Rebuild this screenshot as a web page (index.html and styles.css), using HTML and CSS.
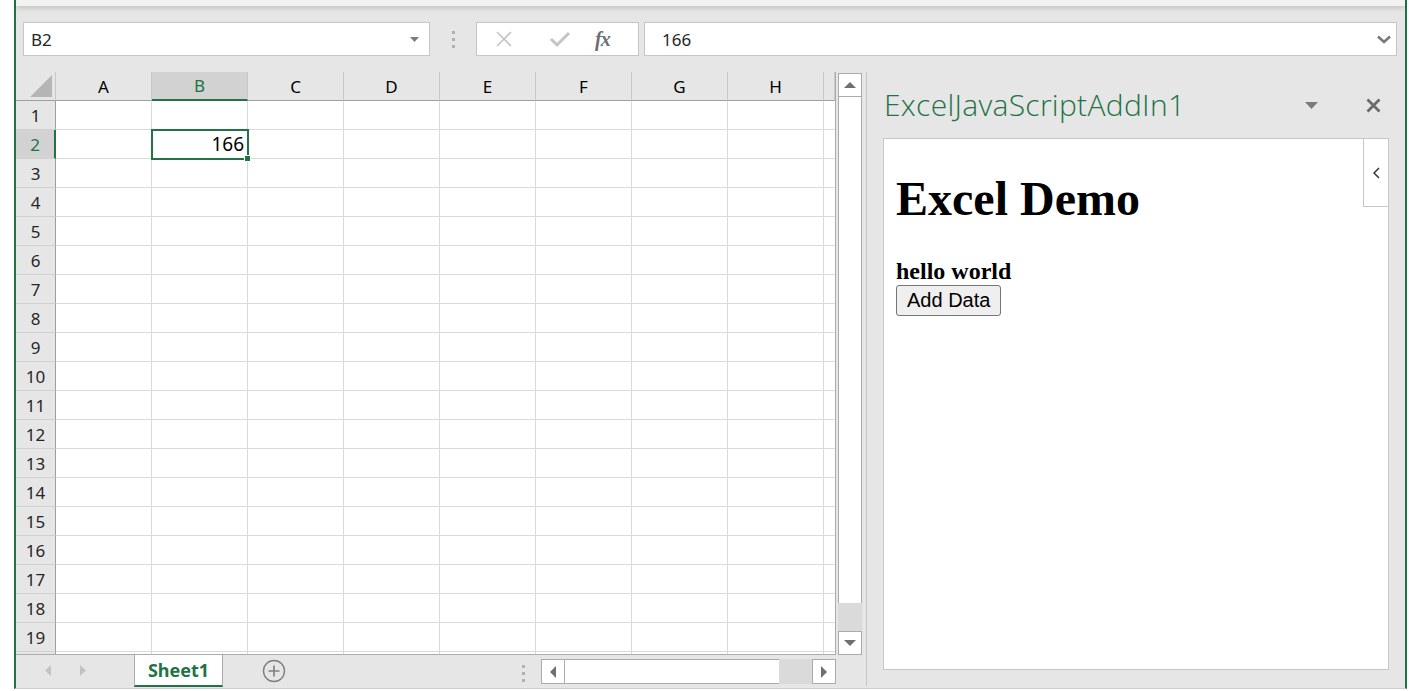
FILE: index.html
```html
<!DOCTYPE html>
<html>
<head>
<meta charset="utf-8">
<title>Excel</title>
<link rel="stylesheet" href="styles.css">
</head>
<body>
<div class="app">
  <div class="gutter"></div>
  <div class="window">
    <div class="topstrip"></div>
    <div class="formula-row">
      <div class="namebox">
        <span>B2</span>
        <svg width="9" height="5" viewBox="0 0 9 5"><path d="M0 0h9L4.5 5z" fill="#7a7a7a"/></svg>
      </div>
      <div class="grip"><i></i><i></i><i></i></div>
      <div class="fbtns">
        <svg class="fx-x" width="18" height="18" viewBox="0 0 18 18"><path d="M2 2L16 16M16 2L2 16" stroke="#c4c4c4" stroke-width="1.6"/></svg>
        <svg class="fx-ok" width="22" height="18" viewBox="0 0 22 18"><path d="M2 9l6 6L20 3" stroke="#c4c4c4" stroke-width="3" fill="none"/></svg>
        <span class="fx">fx</span>
      </div>
      <div class="finput">
        <span>166</span>
        <svg width="14" height="9" viewBox="0 0 14 9"><path d="M1 1.5l6 5.5 6-5.5" stroke="#7a7a7a" stroke-width="2.6" fill="none"/></svg>
      </div>
    </div>
    <div class="main">
      <div class="sheetarea">
        <div class="sheetrow">
          <div class="grid">
            <div class="r hdr">
              <div class="rh corner"><svg width="22" height="22" viewBox="0 0 22 22"><path d="M22 0V22H0z" fill="#b5b5b5"/></svg></div>
              <div class="c">A</div><div class="c sel">B</div><div class="c">C</div><div class="c">D</div><div class="c">E</div><div class="c">F</div><div class="c">G</div><div class="c">H</div><div class="c"></div>
            </div>
            <div class="r"><div class="rh">1</div><div class="c"></div><div class="c"></div><div class="c"></div><div class="c"></div><div class="c"></div><div class="c"></div><div class="c"></div><div class="c"></div><div class="c"></div></div>
            <div class="r"><div class="rh sel">2</div><div class="c"></div><div class="c active">166</div><div class="c"></div><div class="c"></div><div class="c"></div><div class="c"></div><div class="c"></div><div class="c"></div><div class="c"></div></div>
            <div class="r"><div class="rh">3</div><div class="c"></div><div class="c"></div><div class="c"></div><div class="c"></div><div class="c"></div><div class="c"></div><div class="c"></div><div class="c"></div><div class="c"></div></div>
            <div class="r"><div class="rh">4</div><div class="c"></div><div class="c"></div><div class="c"></div><div class="c"></div><div class="c"></div><div class="c"></div><div class="c"></div><div class="c"></div><div class="c"></div></div>
            <div class="r"><div class="rh">5</div><div class="c"></div><div class="c"></div><div class="c"></div><div class="c"></div><div class="c"></div><div class="c"></div><div class="c"></div><div class="c"></div><div class="c"></div></div>
            <div class="r"><div class="rh">6</div><div class="c"></div><div class="c"></div><div class="c"></div><div class="c"></div><div class="c"></div><div class="c"></div><div class="c"></div><div class="c"></div><div class="c"></div></div>
            <div class="r"><div class="rh">7</div><div class="c"></div><div class="c"></div><div class="c"></div><div class="c"></div><div class="c"></div><div class="c"></div><div class="c"></div><div class="c"></div><div class="c"></div></div>
            <div class="r"><div class="rh">8</div><div class="c"></div><div class="c"></div><div class="c"></div><div class="c"></div><div class="c"></div><div class="c"></div><div class="c"></div><div class="c"></div><div class="c"></div></div>
            <div class="r"><div class="rh">9</div><div class="c"></div><div class="c"></div><div class="c"></div><div class="c"></div><div class="c"></div><div class="c"></div><div class="c"></div><div class="c"></div><div class="c"></div></div>
            <div class="r"><div class="rh">10</div><div class="c"></div><div class="c"></div><div class="c"></div><div class="c"></div><div class="c"></div><div class="c"></div><div class="c"></div><div class="c"></div><div class="c"></div></div>
            <div class="r"><div class="rh">11</div><div class="c"></div><div class="c"></div><div class="c"></div><div class="c"></div><div class="c"></div><div class="c"></div><div class="c"></div><div class="c"></div><div class="c"></div></div>
            <div class="r"><div class="rh">12</div><div class="c"></div><div class="c"></div><div class="c"></div><div class="c"></div><div class="c"></div><div class="c"></div><div class="c"></div><div class="c"></div><div class="c"></div></div>
            <div class="r"><div class="rh">13</div><div class="c"></div><div class="c"></div><div class="c"></div><div class="c"></div><div class="c"></div><div class="c"></div><div class="c"></div><div class="c"></div><div class="c"></div></div>
            <div class="r"><div class="rh">14</div><div class="c"></div><div class="c"></div><div class="c"></div><div class="c"></div><div class="c"></div><div class="c"></div><div class="c"></div><div class="c"></div><div class="c"></div></div>
            <div class="r"><div class="rh">15</div><div class="c"></div><div class="c"></div><div class="c"></div><div class="c"></div><div class="c"></div><div class="c"></div><div class="c"></div><div class="c"></div><div class="c"></div></div>
            <div class="r"><div class="rh">16</div><div class="c"></div><div class="c"></div><div class="c"></div><div class="c"></div><div class="c"></div><div class="c"></div><div class="c"></div><div class="c"></div><div class="c"></div></div>
            <div class="r"><div class="rh">17</div><div class="c"></div><div class="c"></div><div class="c"></div><div class="c"></div><div class="c"></div><div class="c"></div><div class="c"></div><div class="c"></div><div class="c"></div></div>
            <div class="r"><div class="rh">18</div><div class="c"></div><div class="c"></div><div class="c"></div><div class="c"></div><div class="c"></div><div class="c"></div><div class="c"></div><div class="c"></div><div class="c"></div></div>
            <div class="r"><div class="rh">19</div><div class="c"></div><div class="c"></div><div class="c"></div><div class="c"></div><div class="c"></div><div class="c"></div><div class="c"></div><div class="c"></div><div class="c"></div></div>
            <div class="r"><div class="rh"></div><div class="c"></div><div class="c"></div><div class="c"></div><div class="c"></div><div class="c"></div><div class="c"></div><div class="c"></div><div class="c"></div><div class="c"></div></div>
          </div>
          <div class="vscroll">
            <div class="sbtn"><svg width="12" height="6" viewBox="0 0 12 6"><path d="M0 6h12L6 0z" fill="#6f6f6f"/></svg></div>
            <div class="vthumb"></div>
            <div class="vtrack"></div>
            <div class="sbtn"><svg width="12" height="6" viewBox="0 0 12 6"><path d="M0 0h12L6 6z" fill="#6f6f6f"/></svg></div>
          </div>
        </div>
        <div class="tabbar">
          <div class="navs">
            <svg width="6" height="11" viewBox="0 0 6 11"><path d="M6 0V11L0 5.5z" fill="#c3c3c3"/></svg>
            <svg width="6" height="11" viewBox="0 0 6 11"><path d="M0 0V11L6 5.5z" fill="#c3c3c3"/></svg>
          </div>
          <div class="tab">Sheet1</div>
          <div class="addsheet"><svg width="24" height="24" viewBox="0 0 24 24"><circle cx="12" cy="12" r="10.5" fill="none" stroke="#7f7f7f" stroke-width="1.4"/><path d="M12 6.5v11M6.5 12h11" stroke="#7f7f7f" stroke-width="1.6"/></svg></div>
          <div class="grip2"><i></i><i></i><i></i></div>
          <div class="hscroll">
            <div class="sbtn"><svg width="6" height="12" viewBox="0 0 6 12"><path d="M6 0V12L0 6z" fill="#6f6f6f"/></svg></div>
            <div class="hthumb"></div>
            <div class="htrack"></div>
            <div class="sbtn"><svg width="6" height="12" viewBox="0 0 6 12"><path d="M0 0V12L6 6z" fill="#6f6f6f"/></svg></div>
          </div>
        </div>
      </div>
      <div class="taskpane">
        <div class="pane-head">
          <div class="pane-title">ExcelJavaScriptAddIn1</div>
          <svg class="pane-menu" width="13" height="7" viewBox="0 0 13 7"><path d="M0 0h13L6.5 7z" fill="#7a7a7a"/></svg>
          <svg class="pane-close" width="15" height="15" viewBox="0 0 15 15"><path d="M1.5 1.5l12 12M13.5 1.5l-12 12" stroke="#6a6a6a" stroke-width="2.8"/></svg>
        </div>
        <div class="pane-body">
          <div class="collapse"><svg width="7" height="12" viewBox="0 0 7 12"><path d="M6 1L1 6l5 5" stroke="#333" stroke-width="1.5" fill="none"/></svg></div>
          <div class="doc">
            <h1>Excel Demo</h1>
            <b class="hello">hello world</b><br>
            <button class="addbtn">Add Data</button>
          </div>
        </div>
      </div>
    </div>
  </div>
  <div class="gutter-r"></div>
</div>
</body>
</html>
```
FILE: styles.css
```css
*, *::before, *::after { box-sizing: border-box; }
body { margin: 0; background: #fff; font-family: "Noto Sans", "Open Sans", sans-serif; color: #000; }
.app { display: flex; width: 1409px; height: 691px; overflow: hidden; }
.gutter { width: 14px; flex: none; background: #fff; }
.gutter-r { flex: 1; background: #fff; }
.window {
  width: 1393px; height: 689px; flex: none;
  border-left: 2px solid #217346; border-right: 2px solid #217346;
  border-bottom: 1px solid #cdcdcd;
  background: #e6e6e6; display: flex; flex-direction: column;
}
.topstrip { height: 6px; flex: none; background: #f3f2f1; box-shadow: 0 2px 5px rgba(0,0,0,.16); position: relative; z-index: 1; }

.formula-row { flex: none; margin-top: 16px; height: 34px; display: flex; padding: 0 8px 0 7px; }
.namebox {
  width: 407px; background: #fff; border: 1px solid #c6c6c6;
  display: flex; align-items: center; justify-content: space-between;
  padding: 0 10px 0 7px; font-size: 17px; color: #262626;
}
.grip { width: 46px; display: flex; flex-direction: column; align-items: center; justify-content: center; gap: 4px; }
.grip i, .grip2 i { display: block; width: 3px; height: 3px; background: #b1b1b1; }
.fbtns { width: 163px; background: #fff; border: 1px solid #c6c6c6; display: flex; align-items: center; }
.fx-x { margin-left: 18px; }
.fx-ok { margin-left: 36px; }
.fx { margin-left: 24px; font-family: "Liberation Serif", serif; font-style: italic; font-weight: bold; font-size: 20px; color: #6e6e6e; letter-spacing: -1px; }
.finput {
  flex: 1; margin-left: 5px; background: #fff; border: 1px solid #c6c6c6;
  display: flex; align-items: center; justify-content: space-between;
  padding: 0 5px 0 17px; font-size: 17px; color: #262626;
}

.main { flex: 1; display: flex; margin-top: 16px; min-height: 0; }
.sheetarea { width: 850px; flex: none; display: flex; flex-direction: column; }
.sheetrow { height: 583px; display: flex; flex: none; }
.grid { width: 820px; overflow: hidden; border-right: 1px solid #ababab; border-bottom: 1px solid #ababab; background: #fff; }
.r { display: flex; height: 29px; }
.c { width: 96px; flex: none; border-right: 1px solid #dadada; border-bottom: 1px solid #dadada; position: relative; }
.c:last-child { flex: 1; border-right: none; }
.rh {
  width: 40px; flex: none; background: #e6e6e6; border-right: 1px solid #9e9e9e; border-bottom: 1px solid #d0d0d0;
  display: flex; align-items: center; justify-content: center; font-size: 17px; color: #262626;
}
.rh.sel { background: #d2d2d2; color: #217346; border-right: 2px solid #217346; }
.hdr .c {
  background: #e6e6e6; border-right: 1px solid #c8c8c8; border-bottom: 1px solid #9e9e9e;
  display: flex; align-items: center; justify-content: center; font-size: 17px; color: #000;
}
.hdr .c.sel { background: #d2d2d2; color: #217346; border-bottom: 2px solid #217346; }
.hdr .rh { border-bottom: 1px solid #9e9e9e; border-right: 1px solid #c8c8c8; align-items: flex-end; justify-content: flex-end; padding: 0 3px 3px 0; }
.rh.corner svg { display: block; }
.active { text-align: right; font-size: 19px; line-height: 28px; padding-right: 3px; color: #000; }
.active::before {
  content: ""; position: absolute; left: -1px; top: -1px; width: 98px; height: 31px;
  border: 2px solid #217346; z-index: 2;
}
.active::after {
  content: ""; position: absolute; right: -4px; bottom: -4px; width: 7px; height: 7px;
  background: #217346; border: 1px solid #fff; z-index: 3;
}

.vscroll { width: 24px; margin: 1px 0 0 2px; display: flex; flex-direction: column; }
.sbtn { width: 24px; height: 24px; flex: none; background: #fff; border: 1px solid #ababab; display: flex; align-items: center; justify-content: center; }
.vthumb { height: 506px; background: #fff; border: 1px solid #ababab; border-top: none; border-bottom: none; }
.vtrack { flex: 1; background: #dadada; }

.tabbar { flex: 1; display: flex; align-items: flex-start; }
.navs { width: 118px; display: flex; gap: 29px; padding: 10px 0 0 29px; }
.tab {
  width: 89px; height: 32px; background: #fff; border-left: 1px solid #ababab; border-right: 1px solid #ababab;
  border-bottom: 2px solid #217346; color: #217346; font-weight: bold; font-size: 18px;
  display: flex; align-items: center; justify-content: center;
}
.addsheet { margin: 4px 0 0 39px; }
.grip2 { width: 20px; margin: 8px 0 0 227px; display: flex; flex-direction: column; align-items: center; gap: 4px; padding-top: 2px; }
.hscroll { margin: 4px 0 0 8px; width: 295px; height: 25px; display: flex; }
.hscroll .sbtn { height: 25px; }
.hthumb { width: 214px; background: #fff; border-top: 1px solid #ababab; border-bottom: 1px solid #ababab; }
.htrack { flex: 1; background: #dadada; }

.taskpane { flex: 1; border-left: 1px solid #c6c6c6; margin-bottom: 2px; display: flex; flex-direction: column; padding: 0 16px 16px 16px; }
.pane-head { height: 66px; flex: none; display: flex; align-items: center; padding-left: 1px; }
.pane-title { font-family: "Open Sans", "Noto Sans", sans-serif; font-weight: 300; font-size: 30px; color: #217346; flex: 1; letter-spacing: 0.3px; margin-top: -2px; }
.pane-menu { margin-right: 48px; }
.pane-close { margin-right: 8px; }
.pane-body { flex: 1; background: #fff; border: 1px solid #c6c6c6; position: relative; }
.collapse {
  position: absolute; right: 0; top: 0; width: 25px; height: 68px; background: #fff;
  border-left: 1px solid #c6c6c6; border-bottom: 1px solid #c6c6c6;
  display: flex; align-items: center; justify-content: center; padding-top: 1px;
}
.doc { padding: 0 12px; font-family: "Liberation Serif", "Times New Roman", serif; }
.doc h1 { font-size: 48px; font-weight: bold; margin: 32px 0; }
.hello { font-size: 24px; }
.addbtn {
  font-family: "Liberation Sans", Arial, sans-serif; font-size: 20px; color: #000;
  background: #efefef; border: 1px solid #767676; border-radius: 3px; height: 31px; padding: 0 10px; margin: 0;
}
```
